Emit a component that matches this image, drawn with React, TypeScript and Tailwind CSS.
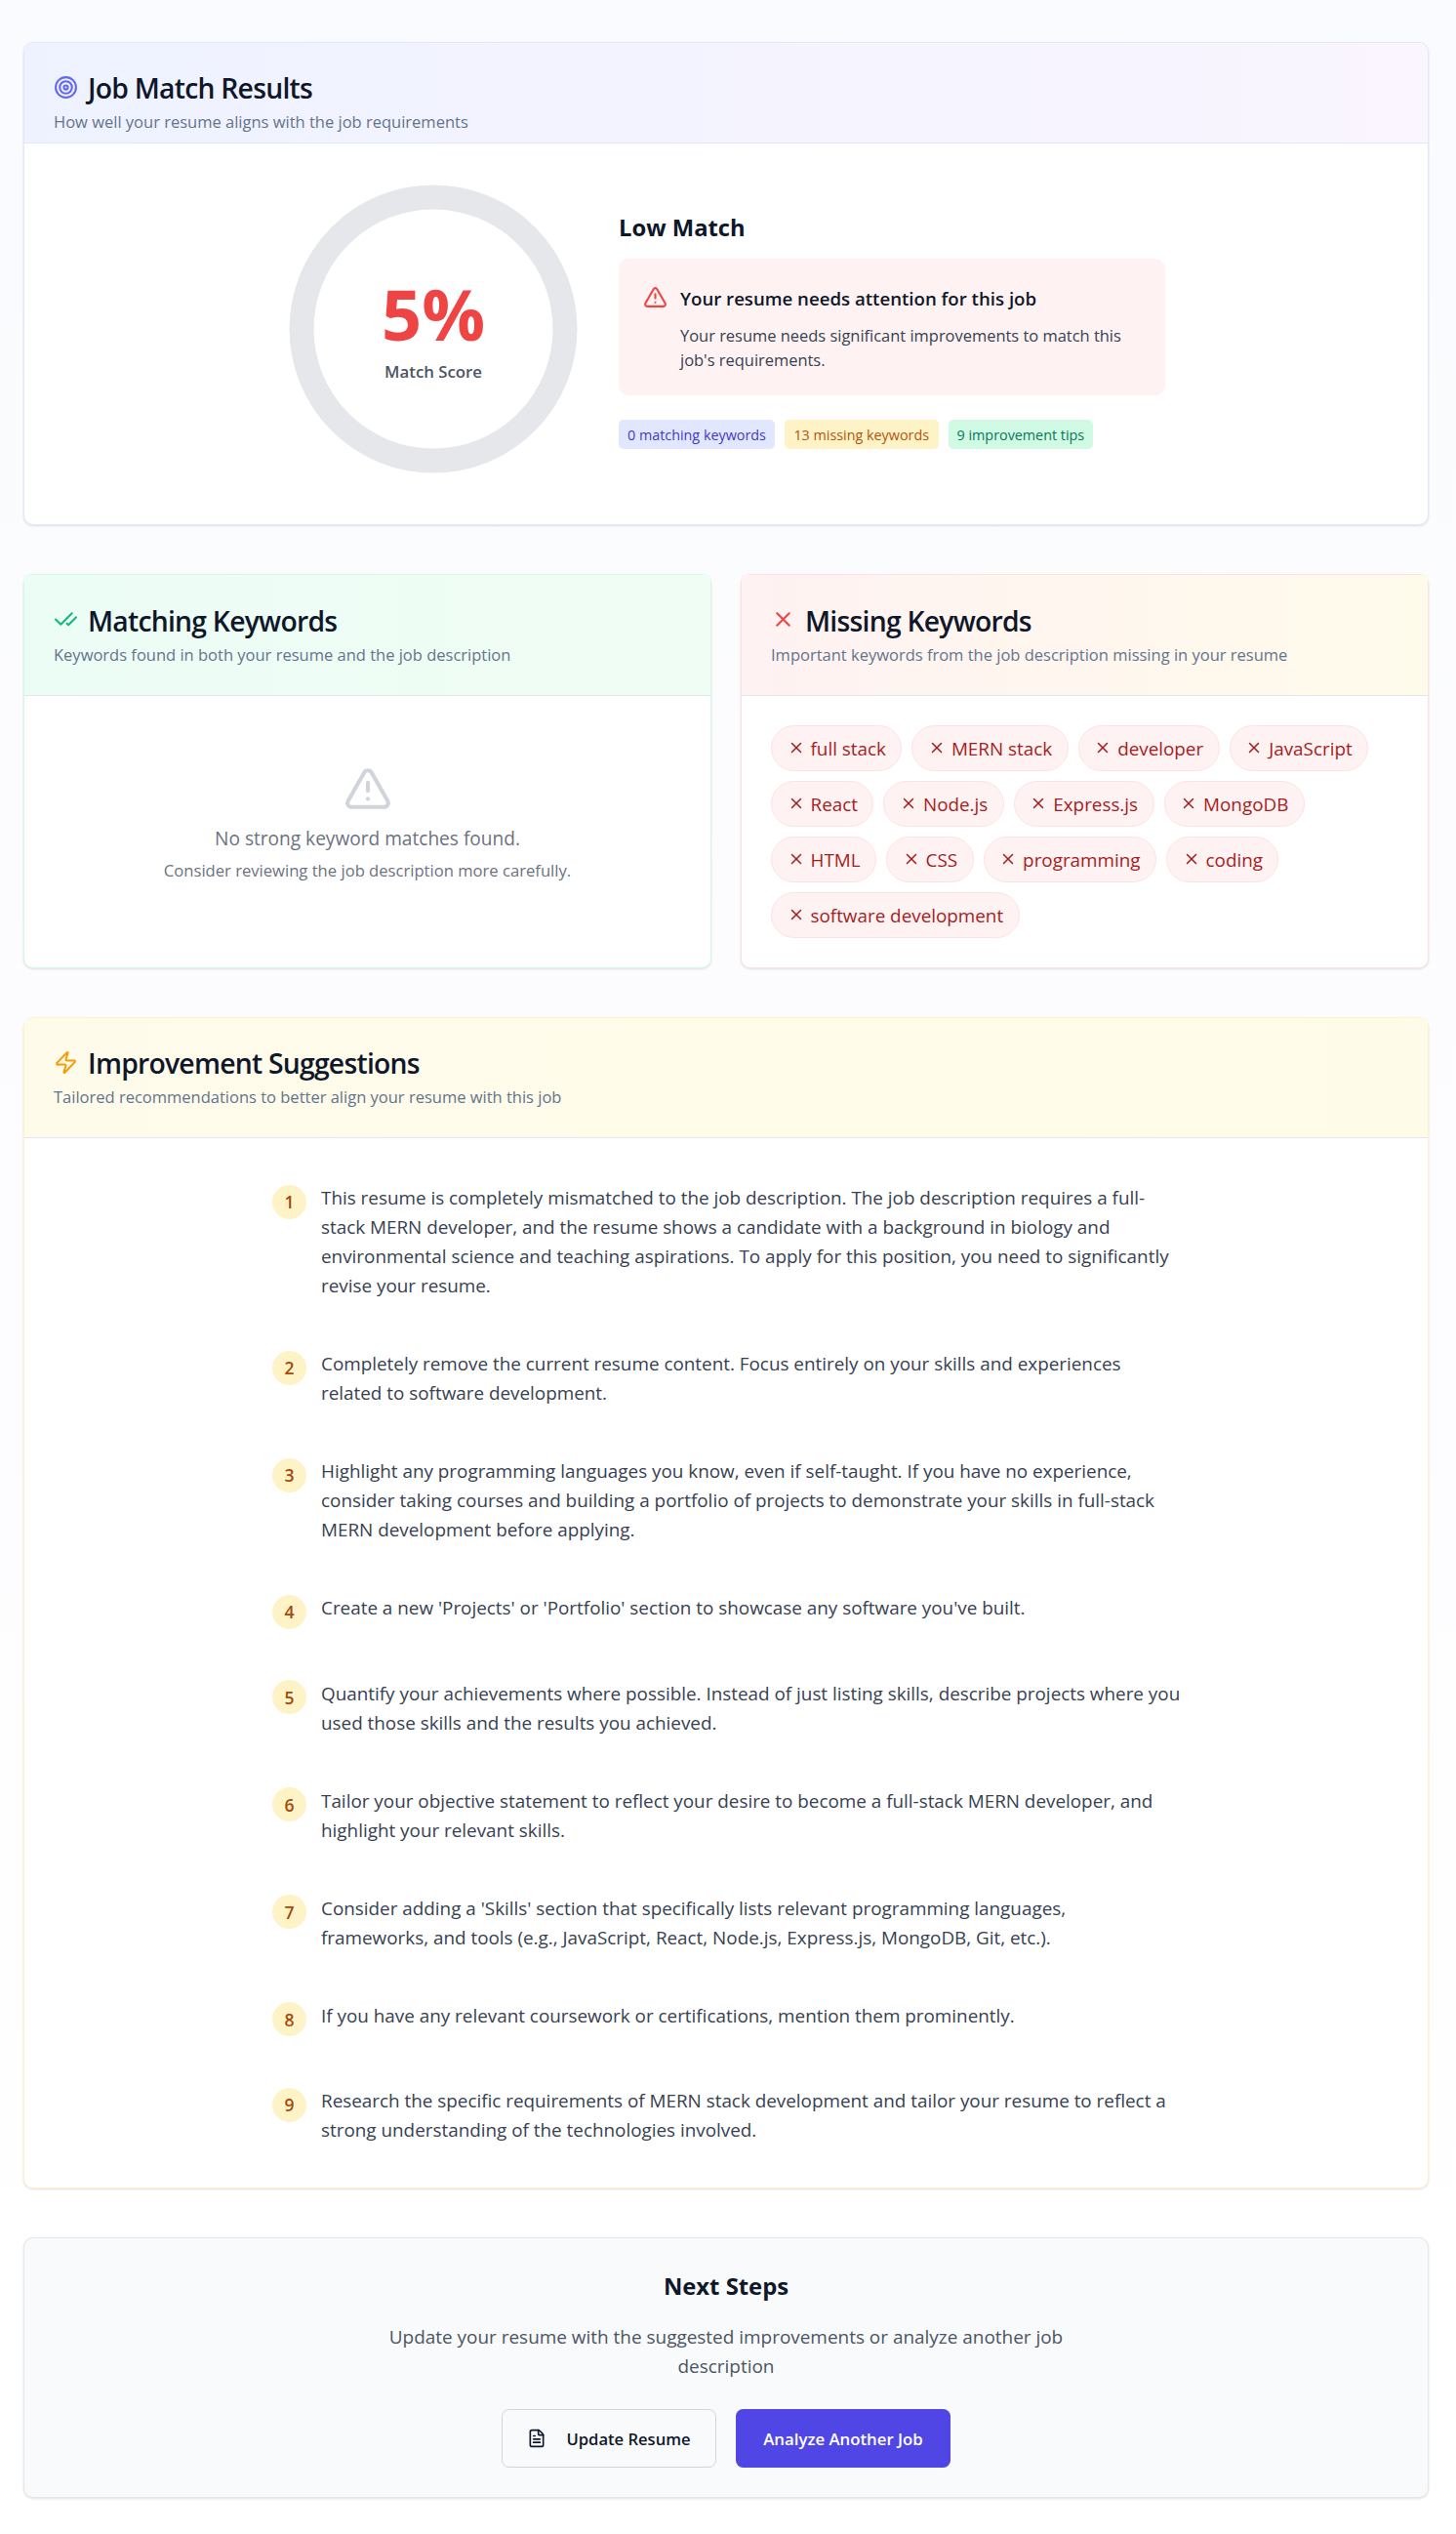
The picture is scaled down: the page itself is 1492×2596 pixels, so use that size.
import type { ReactNode } from "react";
import { CheckCheck, FileText, Target, TriangleAlert, X, Zap } from "lucide-react";

const missing = [
  "full stack", "MERN stack", "developer", "JavaScript",
  "React", "Node.js", "Express.js", "MongoDB",
  "HTML", "CSS", "programming", "coding",
  "software development",
];

const suggestions = [
  "This resume is completely mismatched to the job description. The job description requires a full-stack MERN developer, and the resume shows a candidate with a background in biology and environmental science and teaching aspirations. To apply for this position, you need to significantly revise your resume.",
  "Completely remove the current resume content. Focus entirely on your skills and experiences related to software development.",
  "Highlight any programming languages you know, even if self-taught. If you have no experience, consider taking courses and building a portfolio of projects to demonstrate your skills in full-stack MERN development before applying.",
  "Create a new 'Projects' or 'Portfolio' section to showcase any software you've built.",
  "Quantify your achievements where possible. Instead of just listing skills, describe projects where you used those skills and the results you achieved.",
  "Tailor your objective statement to reflect your desire to become a full-stack MERN developer, and highlight your relevant skills.",
  "Consider adding a 'Skills' section that specifically lists relevant programming languages,\nframeworks, and tools (e.g., JavaScript, React, Node.js, Express.js, MongoDB, Git, etc.).",
  "If you have any relevant coursework or certifications, mention them prominently.",
  "Research the specific requirements of MERN stack development and tailor your resume to reflect a strong understanding of the technologies involved.",
];

function Card({ className, children }: { className: string; children: ReactNode }) {
  return (
    <section className={`rounded-[10px] border shadow-[0_1px_3px_rgba(0,0,0,0.08),0_1px_2px_rgba(0,0,0,0.05)] ${className}`}>
      {children}
    </section>
  );
}

function CardHeader({ className, icon, title, subtitle }: { className: string; icon: ReactNode; title: string; subtitle: string }) {
  return (
    <header className={`border-b bg-linear-to-r px-[30px] ${className}`}>
      <h2 className="flex h-[30px] items-center gap-2.5 text-[28.3px] font-semibold tracking-[-0.75px]">
        {icon}
        <span className="mt-px leading-[30px]">{title}</span>
      </h2>
      <p className="mt-2 text-[16.5px] leading-[25px] text-[#64748b]">{subtitle}</p>
    </header>
  );
}

export default function App() {
  return (
    <main className="h-[2596px] bg-linear-to-b from-[#fafbfe] via-[#fdfdff] to-white pt-[43px] pl-6 font-['Open_Sans',sans-serif] text-[#0f172a]">
      <div className="flex w-[1440px] flex-col gap-[50px]">
        <Card className="h-[495px] overflow-hidden border-[#e0e7ff] bg-white">
          <CardHeader
            className="h-[103px] border-[#e0e7ff] from-[#eef2ff] to-[#faf5ff] pt-[30px]"
            icon={<Target size={25} className="shrink-0 text-[#6366f1]" />}
            title="Job Match Results"
            subtitle="How well your resume aligns with the job requirements"
          />
          <div className="flex items-center justify-center gap-10 pt-10">
            <div className="relative size-[300px]">
              <svg viewBox="0 0 300 300" className="size-full">
                <circle cx="150" cy="150" r="135" fill="none" stroke="#e5e7eb" strokeWidth="25" />
              </svg>
              <div className="absolute inset-0 flex flex-col items-center justify-center pt-[3px]">
                <span className="text-[72px] leading-[75px] font-bold text-[#ef4444]">5%</span>
                <span className="mt-[9px] text-[16.8px] leading-[25px] font-semibold text-[#4b5563]">Match Score</span>
              </div>
            </div>
            <div className="w-[560px]">
              <h3 className="pt-px text-[23.8px] leading-[35px] font-bold">Low Match</h3>
              <div className="mt-[14px] flex h-[140px] gap-[13px] rounded-[10px] bg-[#fef2f2] p-[25px]">
                <TriangleAlert size={25} className="mt-[2px] shrink-0 text-[#ef4444]" />
                <div>
                  <h4 className="pt-px text-[18.64px] leading-[30px] font-semibold">Your resume needs attention for this job</h4>
                  <p className="mt-2.5 text-[16.45px] leading-[25px] text-[#374151]">
                    Your resume needs significant improvements to match this job's requirements.
                  </p>
                </div>
              </div>
              <div className="mt-[25px] flex gap-2.5 text-[14.35px] leading-[29px]">
                <span className="rounded-[5px] bg-[#e0e7ff] px-[9px] pt-px text-[#4338ca]">0 matching keywords</span>
                <span className="rounded-[5px] bg-[#fef3c7] px-[9.5px] pt-px text-[#b45309]">13 missing keywords</span>
                <span className="rounded-[5px] bg-[#d1fae5] px-[9px] pt-px text-[#047857]">9 improvement tips</span>
              </div>
            </div>
          </div>
        </Card>

        <div className="grid h-[404px] grid-cols-2 gap-[30px]">
          <Card className="border-[#d1fae5] bg-white">
            <CardHeader
              className="h-[124px] border-[#e2e8f0] from-[#ecfdf5] to-[#f0fdf4] pt-[31px]"
              icon={<CheckCheck size={25} className="-mt-px shrink-0 text-[#10b981]" />}
              title="Matching Keywords"
              subtitle="Keywords found in both your resume and the job description"
            />
            <div className="flex flex-col items-center pt-[70px] text-[#6b7280]">
              <TriangleAlert size={50} className="text-[#d1d5db]" />
              <p className="mt-[11px] text-[19.1px] leading-[30px]">No strong keyword matches found.</p>
              <p className="mt-[5px] text-[16.63px] leading-[25px]">Consider reviewing the job description more carefully.</p>
            </div>
          </Card>
          <Card className="border-[#fee2e2] bg-white">
            <CardHeader
              className="h-[124px] border-[#e2e8f0] from-[#fef2f2] to-[#fffbeb] pt-[31px]"
              icon={<X size={25} className="-mt-px shrink-0 text-[#ef4444]" />}
              title="Missing Keywords"
              subtitle="Important keywords from the job description missing in your resume"
            />
            <ul className="flex flex-wrap gap-2.5 p-[30px]">
              {missing.map((word) => (
                <li key={word} className="flex h-[47px] items-center gap-1.5 rounded-full border border-[#fee2e2] bg-[#fef2f2] px-[15.5px] text-[18.85px] leading-[30px] text-[#a51d1d]">
                  <X size={18} className="mb-0.5 shrink-0" />
                  {word}
                </li>
              ))}
            </ul>
          </Card>
        </div>

        <Card className="h-[1200px] border-[#fef3c7] bg-white">
          <CardHeader
            className="h-[123px] border-[#e2e8f0] from-[#fffbeb] to-[#fefce8] pt-[30px]"
            icon={<Zap size={25} className="shrink-0 text-[#f59e0b]" />}
            title="Improvement Suggestions"
            subtitle="Tailored recommendations to better align your resume with this job"
          />
          <ol className="mx-auto flex w-[960px] flex-col gap-5 pt-[31px]">
            {suggestions.map((text, i) => (
              <li key={text} className="flex gap-[15px] p-[15px]">
                <span className="mt-[1.5px] mb-px flex size-[35px] shrink-0 items-center justify-center rounded-full bg-[#fef3c7] pt-px text-[17.5px] font-semibold text-[#a34a0c]">
                  {i + 1}
                </span>
                <p className="-mr-1 text-[18.87px] leading-[30px] whitespace-pre-line text-[#374151]">{text}</p>
              </li>
            ))}
          </ol>
        </Card>

        <Card className="flex h-[267px] flex-col items-center border-[#e5e7eb] bg-[#f9fafb] pt-[30px]">
          <h2 className="pt-[2px] text-[23.84px] leading-[35px] font-bold">Next Steps</h2>
          <p className="mt-[19px] w-[720px] text-center text-[18.94px] leading-[30px] text-[#4b5563]">
            Update your resume with the suggested improvements or analyze another job description
          </p>
          <div className="mt-[29px] flex gap-5">
            <button className="flex h-[60px] w-[220px] items-center justify-center gap-5 rounded-[7.5px] border border-[#d1d5db] text-[16.6px] font-semibold">
              <FileText size={20} className="shrink-0" />
              <span className="pt-0.5">Update Resume</span>
            </button>
            <button className="h-[60px] w-[220px] rounded-[7.5px] bg-[#4f46e5] pt-0.5 text-[16.8px] font-semibold text-white">
              Analyze Another Job
            </button>
          </div>
        </Card>
      </div>
    </main>
  );
}
